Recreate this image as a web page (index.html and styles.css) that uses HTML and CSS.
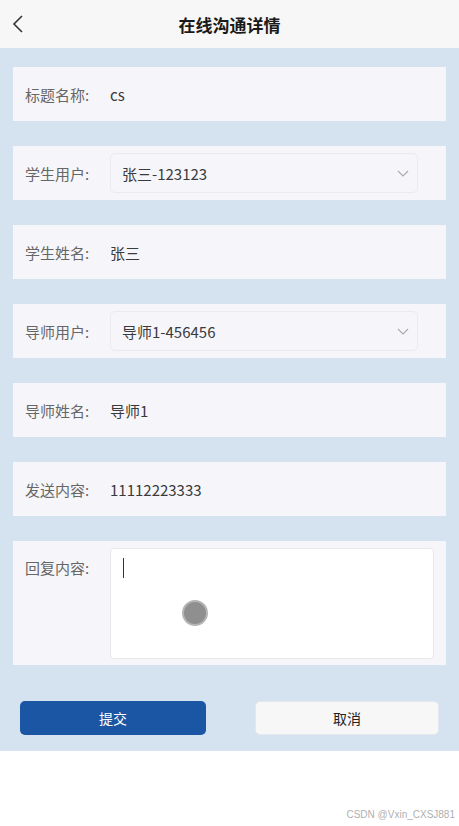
FILE: index.html
```html
<!DOCTYPE html>
<html lang="zh-CN">
<head>
    <meta charset="UTF-8">
    <meta name="viewport" content="width=device-width, initial-scale=1.0">
    <title>在线沟通详情</title>
    <link rel="stylesheet" href="styles.css">
</head>
<body>
    <div class="page">
        <div class="nav-bar">
            <svg class="back-icon" width="14" height="20" viewBox="0 0 14 20">
                <path d="M11 2 L3 10 L11 18" fill="none" stroke="#333" stroke-width="1.6"/>
            </svg>
            <h1>在线沟通详情</h1>
        </div>

        <div class="content">
            <div class="form-row">
                <label>标题名称:</label>
                <div class="value">cs</div>
            </div>

            <div class="form-row">
                <label>学生用户:</label>
                <div class="select-box">
                    <span>张三-123123</span>
                    <svg width="12" height="7" viewBox="0 0 12 7">
                        <path d="M1 1 L6 6 L11 1" fill="none" stroke="#aaa" stroke-width="1.1"/>
                    </svg>
                </div>
            </div>

            <div class="form-row">
                <label>学生姓名:</label>
                <div class="value">张三</div>
            </div>

            <div class="form-row">
                <label>导师用户:</label>
                <div class="select-box">
                    <span>导师1-456456</span>
                    <svg width="12" height="7" viewBox="0 0 12 7">
                        <path d="M1 1 L6 6 L11 1" fill="none" stroke="#aaa" stroke-width="1.1"/>
                    </svg>
                </div>
            </div>

            <div class="form-row">
                <label>导师姓名:</label>
                <div class="value">导师1</div>
            </div>

            <div class="form-row">
                <label>发送内容:</label>
                <div class="value">11112223333</div>
            </div>

            <div class="form-row tall">
                <label>回复内容:</label>
                <div class="textarea">
                    <span class="caret"></span>
                    <span class="touch-dot"></span>
                </div>
            </div>

            <div class="btn-row">
                <button class="btn primary">提交</button>
                <button class="btn secondary">取消</button>
            </div>
        </div>

        <div class="watermark">CSDN @Vxin_CXSJ881</div>
    </div>
</body>
</html>
```

FILE: styles.css
```css
/* General Page Styling */
body {
    font-family: 'Noto Sans CJK SC', 'Noto Sans', sans-serif;
    background: #ffffff;
    margin: 0;
    padding: 0;
}

.page {
    width: 459px;
    height: 826px;
    position: relative;
}

/* Header */
.nav-bar {
    height: 48px;
    background: #f7f7f7;
    display: flex;
    align-items: center;
    justify-content: center;
    position: relative;
}

.back-icon {
    position: absolute;
    left: 11px;
    top: 14px;
}

h1 {
    margin: 0;
    font-size: 17px;
    font-weight: bold;
    color: #1a1a1a;
}

/* Form Area */
.content {
    background: #d5e3f0;
    padding: 19px 13px 16px;
    display: flex;
    flex-direction: column;
    gap: 25px;
}

.form-row {
    height: 54px;
    background: #f6f6fa;
    display: flex;
    align-items: center;
    padding: 0 12px;
}

.form-row label {
    width: 85px;
    flex-shrink: 0;
    font-size: 15px;
    color: #666666;
}

.value {
    font-size: 15px;
    color: #3a3a3a;
}

.select-box {
    width: 287px;
    height: 38px;
    border: 1px solid #ebebeb;
    border-radius: 5px;
    display: flex;
    align-items: center;
    justify-content: space-between;
    padding: 0 8px 0 11px;
    font-size: 15px;
    color: #3a3a3a;
}

.form-row.tall {
    height: 124px;
    align-items: flex-start;
}

.form-row.tall label {
    padding-top: 16px;
}

.textarea {
    margin-top: 7px;
    width: 323px;
    height: 109px;
    background: #ffffff;
    border: 1px solid #e8e8e8;
    border-radius: 4px;
    position: relative;
}

.caret {
    position: absolute;
    left: 12px;
    top: 9px;
    width: 1px;
    height: 20px;
    background: #333333;
}

.touch-dot {
    position: absolute;
    left: 71px;
    top: 51px;
    width: 22px;
    height: 22px;
    border-radius: 50%;
    background: #8f8f8f;
    border: 2px solid #b5b5b5;
}

/* Buttons */
.btn-row {
    display: flex;
    justify-content: space-between;
    padding: 11px 7px 0;
}

.btn {
    height: 34px;
    font-family: inherit;
    font-size: 14px;
    border-radius: 5px;
    border: none;
    cursor: pointer;
}

.primary {
    width: 186px;
    background: #1a56a3;
    color: #ffffff;
}

.secondary {
    width: 184px;
    background: #f7f7f7;
    color: #222222;
    border: 1px solid #e4e8ee;
}

.watermark {
    position: absolute;
    right: 4px;
    bottom: 6px;
    font-family: 'Liberation Sans', sans-serif;
    font-size: 10px;
    color: #b0b0b0;
}
```
